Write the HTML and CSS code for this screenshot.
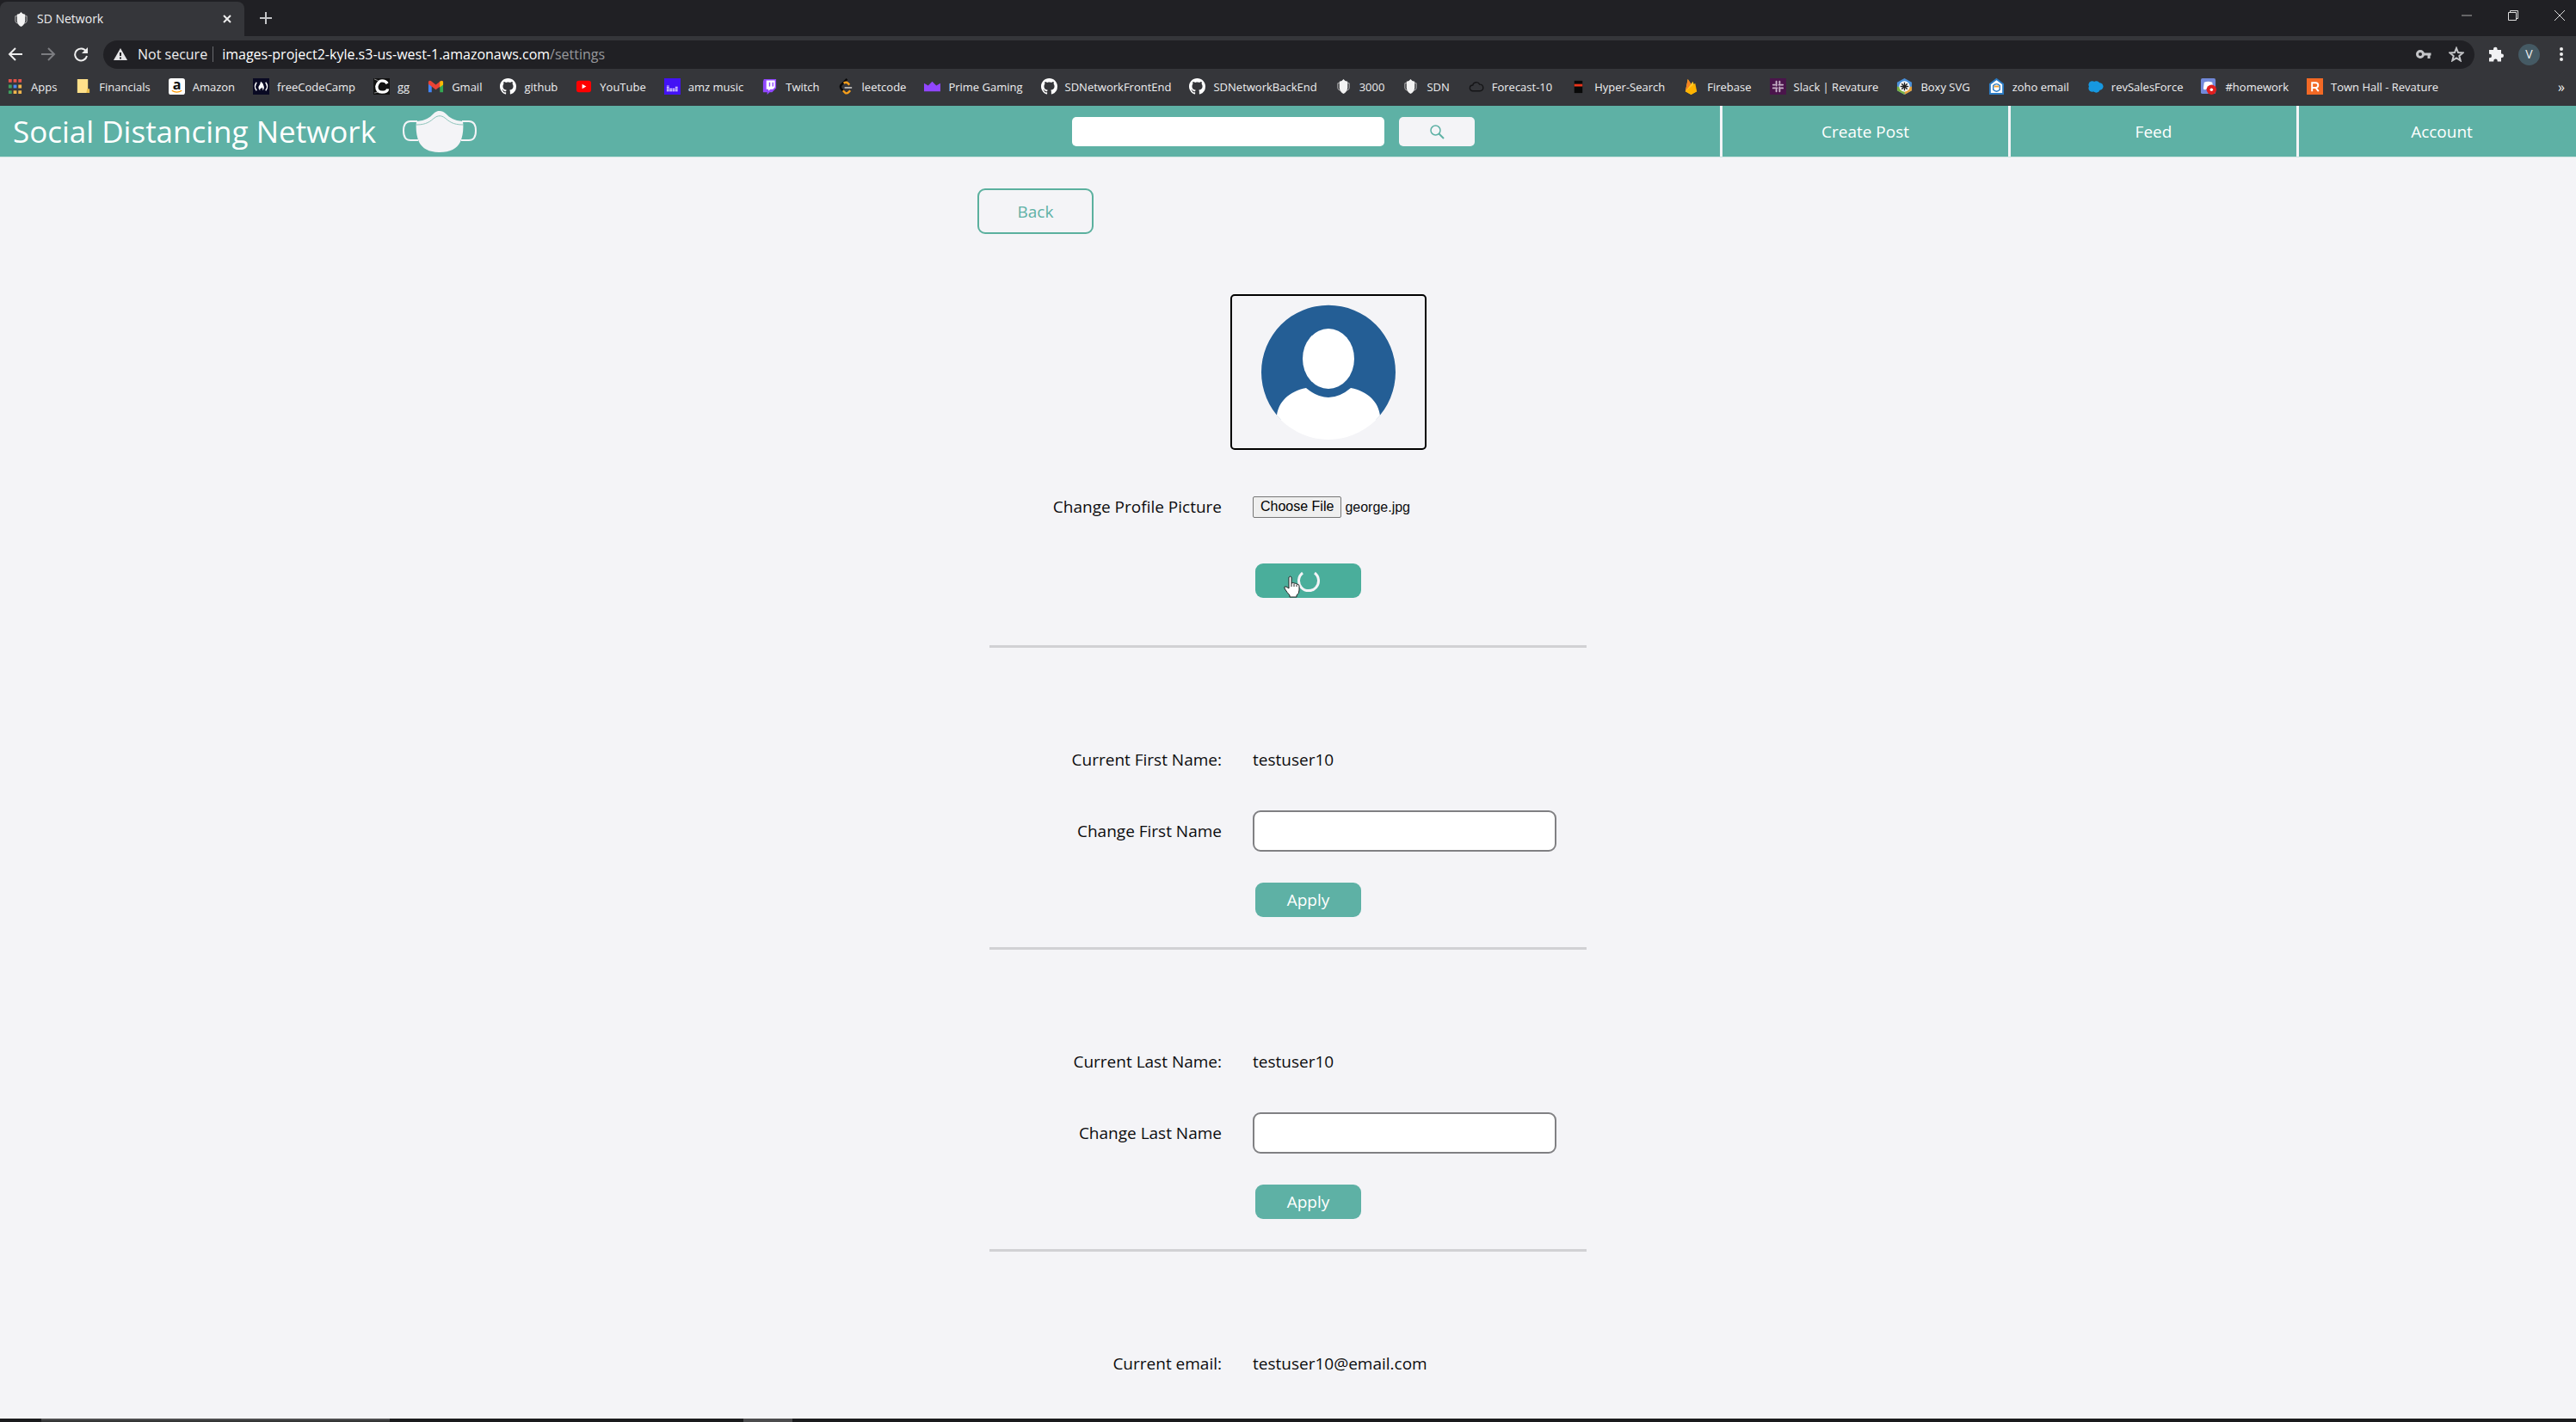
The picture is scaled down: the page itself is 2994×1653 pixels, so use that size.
FILE: index.html
```html
<!DOCTYPE html>
<html lang="en">
<head>
<meta charset="utf-8">
<title>SD Network</title>
<link rel="stylesheet" href="styles.css">
</head>
<body>
<svg class="defs" aria-hidden="true">
  <symbol id="i-mask" viewBox="0 0 20 20"><path d="M5 6H3v6q0 2 3 3M15 6h2v6q0 2-3 3" fill="none" stroke="#b9b9bc" stroke-width="1"/><path d="M5 4q3 0 5-3q2 3 5 3v8q-1 5-5 7q-4-2-5-7z" fill="#f2f2f2"/></symbol>
  <symbol id="i-github" viewBox="0 0 16 16"><path fill="#fff" d="M8 0C3.58 0 0 3.58 0 8c0 3.54 2.29 6.53 5.47 7.59.4.07.55-.17.55-.38 0-.19-.01-.82-.01-1.49-2.01.37-2.53-.49-2.69-.94-.09-.23-.48-.94-.82-1.13-.28-.15-.68-.52-.01-.53.63-.01 1.08.58 1.23.82.72 1.21 1.87.87 2.33.66.07-.52.28-.87.51-1.07-1.78-.2-3.64-.89-3.64-3.95 0-.87.31-1.59.82-2.15-.08-.2-.36-1.02.08-2.12 0 0 .67-.21 2.2.82.64-.18 1.32-.27 2-.27s1.36.09 2 .27c1.53-1.04 2.2-.82 2.2-.82.44 1.1.16 1.92.08 2.12.51.56.82 1.27.82 2.15 0 3.07-1.87 3.75-3.65 3.95.29.25.54.73.54 1.48 0 1.07-.01 1.93-.01 2.2 0 .21.15.46.55.38A8.01 8.01 0 0 0 16 8c0-4.42-3.58-8-8-8z"/></symbol>
</svg>

<header class="browser">
  <div class="tabs">
    <div class="tab">
      <svg class="fav"><use href="#i-mask"/></svg>
      <span class="tab-title">SD Network</span>
      <button class="bare" aria-label="Close tab"><svg width="10" height="10" viewBox="0 0 10 10"><path d="M1 1l8 8M9 1l-8 8" stroke="#eee" stroke-width="2"/></svg></button>
    </div>
    <button class="bare new-tab" aria-label="New tab"><svg width="14" height="14" viewBox="0 0 14 14"><path d="M7 0v14M0 7h14" stroke="#c4c5c8" stroke-width="2"/></svg></button>
    <div class="window-controls">
      <button class="bare" aria-label="Minimize"><svg width="14" height="14" viewBox="0 0 14 14"><path d="M1 7h12" stroke="#aaa"/></svg></button>
      <button class="bare" aria-label="Restore"><svg width="14" height="14" viewBox="0 0 14 14"><path d="M1.500 3.500h9v9h-9zM3.500 3V1.500h9v9H11" fill="none" stroke="#ddd"/></svg></button>
      <button class="bare" aria-label="Close"><svg width="14" height="14" viewBox="0 0 14 14"><path d="M1 1l12 12M13 1L1 13" stroke="#ddd"/></svg></button>
    </div>
  </div>

  <div class="toolbar">
    <button class="bare" aria-label="Back"><svg width="18" height="18" viewBox="0 0 18 18"><path d="M17 9H2M9 2L2 9l7 7" fill="none" stroke="#eee" stroke-width="2"/></svg></button>
    <button class="bare" aria-label="Forward"><svg width="18" height="18" viewBox="0 0 18 18"><path d="M1 9h15M9 2l7 7-7 7" fill="none" stroke="#7c7d81" stroke-width="2"/></svg></button>
    <button class="bare" aria-label="Reload"><svg width="18" height="18" viewBox="0 0 18 18"><path d="M15 5.500A7 7 0 1 0 16 11" fill="none" stroke="#eee" stroke-width="2"/><path d="M17 1v7h-7z" fill="#eee"/></svg></button>
    <div class="address">
      <svg width="16" height="16" viewBox="0 0 16 16"><path d="M8 1l8 14H0z" fill="#e4e4e6"/><path d="M8 6v4M8 11.500v2" stroke="#202124" stroke-width="2"/></svg>
      <span class="insecure">Not secure</span>
      <span class="url">images-project2-kyle.s3-us-west-1.amazonaws.com<span class="path">/settings</span></span>
      <button class="bare" aria-label="Saved passwords"><svg width="18" height="14" viewBox="0 0 18 14"><circle cx="5" cy="7" r="3.500" fill="none" stroke="#c4c5c8" stroke-width="3"/><path d="M9 7h8.500M15 7v5" stroke="#c4c5c8" stroke-width="3"/></svg></button>
      <button class="bare" aria-label="Bookmark this page"><svg width="18" height="18" viewBox="0 0 18 18"><path d="M9 2l2 5 5.500.4-4.200 3.600 1.400 5.400L9 13.500l-4.700 2.900L5.700 11 1.500 7.400 7 7z" fill="none" stroke="#c4c5c8" stroke-width="2"/></svg></button>
    </div>
    <button class="bare ext" aria-label="Extensions"><svg width="18" height="18" viewBox="0 0 18 18"><path d="M1 4h5V3a2.300 2.300 0 0 1 4.600 0v1H15v4.500h.7a2.300 2.300 0 0 1 0 4.600H15V17.500h-4.300v-.8a2.200 2.200 0 0 0-4.400 0v.8H1v-4.300h.8a2.200 2.200 0 0 0 0-4.400H1z" fill="#f1f1f3"/></svg></button>
    <button class="bare avatar" aria-label="Profile">V</button>
    <button class="bare" aria-label="Menu"><svg width="6" height="18" viewBox="0 0 6 18"><g fill="#eee"><circle cx="3" cy="3" r="2"/><circle cx="3" cy="9" r="2"/><circle cx="3" cy="15" r="2"/></g></svg></button>
  </div>

  <nav class="bookmarks" aria-label="Bookmarks">
    <a href="#"><svg class="fav" viewBox="0 0 20 20"><path d="M2 1h4v4H2zM8 1h4v4H8zM14 1h4v4h-4z" fill="#e4534a"/><path d="M2 8h4v4H2zM2 15h4v4H2z" fill="#3f9f5f"/><path d="M8 8h4v4H8z" fill="#4a8af4"/><path d="M14 8h4v4h-4zM8 15h4v4H8zM14 15h4v4h-4z" fill="#f0b54c"/></svg>Apps</a>
    <a href="#"><svg class="fav" viewBox="0 0 20 20"><path d="M3 1h13v12l2 5H3z" fill="#ffe08a"/><path d="M15 13h3v5h-4z" fill="#e9bd4d"/></svg>Financials</a>
    <a href="#"><svg class="fav" viewBox="0 0 20 20"><rect width="20" height="20" rx="3" fill="#fff"/><text x="10" y="14" text-anchor="middle" class="letter">a</text><path d="M4 15q6 4 12 0" fill="none" stroke="#f90" stroke-width="1.500"/></svg>Amazon</a>
    <a href="#"><svg class="fav" viewBox="0 0 20 20"><path d="M0 0h20v20H0z" fill="#0a0a23"/><path d="M4.500 5q-4 5 0 10M15.500 5q4 5 0 10" fill="none" stroke="#fff" stroke-width="1.500"/><path d="M9.500 4q3 2 3.500 5 1.500 3-1 6 .5-2-1-4-1 2-2 1.500-1 1 0 2.500-3-2-2-5 2-2 2.500-6z" fill="#fff"/></svg>freeCodeCamp</a>
    <a href="#"><svg class="fav" viewBox="0 0 20 20"><path d="M0 0h20v20H0z" fill="#111"/><path d="M17 6.500Q15 3 10.500 3T4 10q0 7 6.500 7t7-4" fill="none" stroke="#fff" stroke-width="3.500"/><path d="M1 1l5 2M1 18l5-1" stroke="#999"/></svg>gg</a>
    <a href="#"><svg class="fav" viewBox="0 0 20 20"><path d="M1 5v12h4V8z" fill="#4285f4"/><path d="M19 5v12h-4V8z" fill="#34a853"/><path d="M1 4q2-2 4 0l5 4 5-4q2-2 4 0v3l-9 7-9-7z" fill="#ea4335"/><path d="M15 4q4-2 4 1v3l-4 3z" fill="#fbbc04"/></svg>Gmail</a>
    <a href="#"><svg class="fav"><use href="#i-github"/></svg>github</a>
    <a href="#"><svg class="fav" viewBox="0 0 20 20"><rect x="1" y="3" width="18" height="14" rx="3" fill="#f00"/><path d="M8 7l5 3-5 3z" fill="#fff"/></svg>YouTube</a>
    <a href="#"><svg class="fav" viewBox="0 0 20 20"><path d="M0 0h20v20H0z" fill="#4312f5"/><path d="M4.500 16V9M8 16v-4M11.500 16v-4M15 16v-6" stroke="#d9cffd" stroke-width="3" stroke-dasharray="1.500 .6"/></svg>amz music</a>
    <a href="#"><svg class="fav" viewBox="0 0 20 20"><path d="M3 1h15v11l-5 5h-3l-3 3v-3H2V4z" fill="#9146ff"/><path d="M6 2.500h10.500V11L14 13.500h-3l-2.500 2v-2H6z" fill="#fff"/><path d="M10 5v5M14 5v5" stroke="#9146ff" stroke-width="1.500"/></svg>Twitch</a>
    <a href="#"><svg class="fav" viewBox="0 0 20 20"><path d="M11 1L4 8q-2 2 0 5l3 3" fill="none" stroke="#080808" stroke-width="2.500"/><path d="M7 6q3-2 5 0l2 2M6 15l3 3q2 1 4-1l2-2" fill="none" stroke="#f89f1b" stroke-width="2.500"/><path d="M8 11.500h9" stroke="#b3b3b3" stroke-width="2"/></svg>leetcode</a>
    <a href="#"><svg class="fav" viewBox="0 0 20 20"><path d="M0 6l5 3 5-5 5 5 5-3v10H0z" fill="#9146ff"/></svg>Prime Gaming</a>
    <a href="#"><svg class="fav"><use href="#i-github"/></svg>SDNetworkFrontEnd</a>
    <a href="#"><svg class="fav"><use href="#i-github"/></svg>SDNetworkBackEnd</a>
    <a href="#"><svg class="fav"><use href="#i-mask"/></svg>3000</a>
    <a href="#"><svg class="fav"><use href="#i-mask"/></svg>SDN</a>
    <a href="#"><svg class="fav" viewBox="0 0 20 20"><path d="M6 15.500a3.500 3.500 0 0 1 0-7 4.500 4.500 0 0 1 8.500-1 4 4 0 0 1 .5 8z" fill="none" stroke="#151517" stroke-width="1.500"/></svg>Forecast-10</a>
    <a href="#"><svg class="fav" viewBox="0 0 20 20"><path d="M5 3h10v15H5z" fill="#080808"/><path d="M5 7h10v3H5z" fill="#e8351c"/></svg>Hyper-Search</a>
    <a href="#"><svg class="fav" viewBox="0 0 20 20"><path d="M3 16L6 1l4 6 2-3 5 12-7 4z" fill="#ffca28"/><path d="M3 16L6 1l4 6z" fill="#f58220"/><path d="M3 16L15 6l2 10-7 4z" fill="#ffb300"/></svg>Firebase</a>
    <a href="#"><svg class="fav" viewBox="0 0 20 20"><path d="M0 0h20v20H0z" fill="#4a154b"/><path d="M8 4v5M12 11v5M11 8h5M4 12h5M12 4v2M8 14v2M4 8h2M14 12h2" stroke="#c9b5ca" stroke-width="2" stroke-linecap="round"/></svg>Slack | Revature</a>
    <a href="#"><svg class="fav" viewBox="0 0 20 20"><path d="M10 0l9 5v10l-9 5-9-5V5z" fill="#4a90d9"/><path d="M19 10v5l-9 5v-8z" fill="#e9a23b"/><path d="M1 10v5l9 5v-8z" fill="#7cb342"/><circle cx="10" cy="10" r="6.500" fill="#fff"/><path d="M10 5v10M5 10h10M6.500 6.500l7 7M13.500 6.500l-7 7" stroke="#222" stroke-width="1.500"/></svg>Boxy SVG</a>
    <a href="#"><svg class="fav" viewBox="0 0 20 20"><path d="M10 1l8 6v12H2V7z" fill="#fff" stroke="#2b7bc4" stroke-width="2"/><path d="M6 9q4-4 8 0v5q-4 4-8 0z" fill="none" stroke="#2b7bc4" stroke-width="1.500"/><path d="M7 10h6" stroke="#f0a030" stroke-width="2"/></svg>zoho email</a>
    <a href="#"><svg class="fav" viewBox="0 0 20 20"><g fill="#1798e0"><circle cx="6" cy="8" r="4.500"/><circle cx="11" cy="8" r="4.500"/><circle cx="15" cy="10" r="4.500"/><circle cx="6" cy="12" r="4.500"/><circle cx="11" cy="13" r="4.500"/></g></svg>revSalesForce</a>
    <a href="#"><svg class="fav" viewBox="0 0 20 20"><rect width="18" height="19" rx="2" fill="#7289da"/><path d="M4 5q5-2 10 0l1 8q-3 2-5 0H7q-2 2-4 0z" fill="#fff"/><circle cx="13" cy="14" r="6" fill="#e01e1e"/><circle cx="13" cy="14" r="1.800" fill="#fff"/></svg>#homework</a>
    <a href="#"><svg class="fav" viewBox="0 0 20 20"><path d="M0 0h20v20H0z" fill="#f26925"/><path d="M6.500 16V5.500H11q3 0 3 3t-3 3H7M11 11.500l3.500 4.500" fill="none" stroke="#fff" stroke-width="2"/></svg>Town Hall - Revature</a>
    <button class="bare more" aria-label="More bookmarks">»</button>
  </nav>
</header>

<header class="site">
  <a class="brand" href="#">Social Distancing Network
    <svg width="86" height="50" viewBox="0 0 86 50"><path d="M17 13H9C3 13 1 17 1 24s3 11 8 11h9M69 13h8c6 0 8 4 8 11s-3 11-8 11h-9" fill="none" stroke="#f4f4f7" stroke-width="2"/><path d="M16 13C27 12 31 9 36 4c4-4 10-4 14 0 5 5 9 8 20 9 1 9 0 17-3 24-4 8-12 12-24 12s-20-4-24-12c-3-7-4-15-3-24z" fill="#f4f4f7"/><path d="M16 17c12 0 16-4 21-8 4-3 8-3 12 0 5 4 9 8 21 8" fill="none" stroke="#8fc5bc" stroke-width="1"/></svg>
  </a>
  <form class="search">
    <input type="search" aria-label="Search">
    <button type="button" aria-label="Search"><svg width="18" height="18" viewBox="0 0 18 18"><circle cx="7.500" cy="7.500" r="5.500" fill="none" stroke="#5eb1a5" stroke-width="1.500"/><path d="M11.500 11.500L17 17" stroke="#5eb1a5" stroke-width="2"/></svg></button>
  </form>
  <nav class="site-nav">
    <a href="#">Create Post</a>
    <a href="#">Feed</a>
    <a href="#">Account</a>
  </nav>
</header>

<main class="settings">
  <button class="back">Back</button>

  <form class="section picture">
    <svg class="portrait" viewBox="0 0 224 177" role="img" aria-label="Profile picture"><clipPath id="disc"><circle cx="112" cy="89" r="78"/></clipPath><path d="M57 144a78 78 0 1 1 110 0z" fill="#245e95"/><g clip-path="url(#disc)"><path d="M52 139c2-16 14-28 34-32q26 22 52 0c20 4 32 16 34 32v40H52z" fill="#fff"/></g><ellipse cx="112" cy="73" rx="30" ry="35" fill="#fff"/></svg>
    <label for="photo">Change Profile Picture</label>
    <input id="photo" class="file" type="file">
    <button class="apply busy" type="button" aria-label="Applying">
      <svg width="28" height="28" viewBox="0 0 28 28"><path d="M7 5a11.500 11.500 0 1 0 14 0" fill="none" stroke="#f4f4f7" stroke-width="3"/></svg>
      <svg class="pointer" width="20" height="26" viewBox="0 0 20 26"><path d="M7 2q2-2 3 0v7q2-1 3 0 2 0 3 1 3 0 3 2v5q0 4-3 6v2H8v-2q-3-3-6-8-1-3 2-2l3 2z" fill="#fff" stroke="#222"/><path d="M10 9v4M13 10v3M16 11v2" stroke="#222"/></svg>
    </button>
  </form>

  <form class="section">
    <span class="name">Current First Name:</span><span>testuser10</span>
    <label for="first">Change First Name</label><input id="first" class="field" type="text">
    <button class="apply" type="button">Apply</button>
  </form>

  <form class="section">
    <span class="name">Current Last Name:</span><span>testuser10</span>
    <label for="last">Change Last Name</label><input id="last" class="field" type="text">
    <button class="apply" type="button">Apply</button>
  </form>

  <form class="section last">
    <span class="name">Current email:</span><span>testuser10@email.com</span>
  </form>
</main>

<footer class="taskbar"><span class="task wide"></span><span class="task"></span></footer>
<script src="script.js"></script>
</body>
</html>
```
FILE: styles.css
```css
* { box-sizing: border-box; }
body {
  margin: 0;
  min-height: 100vh;
  display: flex;
  flex-direction: column;
  background: #f4f4f7;
  color: #0c0c0e;
  font: 19px/26px "Open Sans", "Noto Sans", sans-serif;
}
button, input { font: inherit; color: inherit; }
a { color: inherit; text-decoration: none; }
svg { display: block; flex: none; }
.defs { position: absolute; width: 0; height: 0; }
.bare {
  display: flex;
  align-items: center;
  justify-content: center;
  padding: 0;
  border: 0;
  background: none;
}
.fav { width: 19px; height: 19px; overflow: visible; }
.letter { font: bold 17px "Open Sans", sans-serif; fill: #111; }

/* Browser frame */
.browser { background: #35363a; color: #eeeef0; padding-bottom: 6px; }
.tabs { display: flex; align-items: center; height: 42px; background: #202024; }
.tab {
  display: flex;
  align-items: center;
  gap: 9px;
  width: 284px;
  height: 40px;
  margin-top: 2px;
  padding: 0 15px;
  border-radius: 8px 8px 0 0;
  background: #35363a;
  font-size: 14px;
}
.tab-title { flex: 1; }
.new-tab { margin-left: 18px; }
.window-controls { display: flex; gap: 40px; margin-left: auto; padding: 0 12px 6px 0; }
.toolbar { display: flex; align-items: center; height: 42px; padding: 0 14px 0 9px; gap: 20px; }
.address {
  flex: 1;
  display: flex;
  align-items: center;
  gap: 20px;
  height: 33px;
  margin-left: -3px;
  padding: 0 12px;
  border-radius: 17px;
  background: #202024;
  font-size: 16px;
}
.address > svg { margin-right: -8px; }
.insecure { padding-right: 6px; border-right: 1px solid #6a6b6f; line-height: 18px; }
.url { flex: 1; margin-left: -10px; color: #fff; }
.path { color: #97989c; }
.ext { margin-left: -4px; }
.avatar { width: 25px; height: 25px; margin-left: -3px; border-radius: 50%; background: #455a64; font-size: 14px; }
.toolbar > .avatar + .bare { width: 6px; margin-left: 2px; }
.bookmarks {
  display: flex;
  align-items: center;
  gap: 21px;
  height: 33px;
  padding: 0 13px 0 8px;
  font-size: 13px;
  white-space: nowrap;
}
.bookmarks a { display: flex; align-items: center; gap: 9px; }
.more { margin-left: auto; font-size: 16px; }

/* Site header */
.site { display: flex; height: 60px; padding-top: 1px; background: #5eb1a5; border-bottom: 1px solid #cfe5e2; color: #fff; }
.brand { flex: 1; display: flex; align-items: center; gap: 31px; padding-left: 15px; font-size: 35px; }
.search { display: flex; align-items: center; gap: 17px; margin-right: 285px; }
.search input { width: 363px; height: 34px; border: 0; border-radius: 5px; background: #fff; }
.search button {
  display: flex;
  align-items: center;
  justify-content: center;
  width: 88px;
  height: 34px;
  border: 0;
  border-radius: 5px;
  background: #f4f4f7;
}
.site-nav { display: flex; margin-top: -1px; }
.site-nav a {
  display: flex;
  align-items: center;
  justify-content: center;
  width: 335px;
  padding-top: 1px;
  border-left: 3px solid #f4f4f7;
}
.site-nav a:last-child { width: 325px; padding-left: 10px; }

/* Settings form */
.settings { width: 100%; max-width: 722px; margin: 0 auto; padding: 36px 14px 0; }
.back {
  display: block;
  width: 135px;
  height: 53px;
  margin-left: -14px;
  border: 2px solid #5bb09e;
  border-radius: 9px;
  background: none;
  color: #5eb1a5;
}
.section {
  display: grid;
  grid-template-columns: 270px 353px;
  column-gap: 36px;
  align-items: center;
  padding: 117px 0 35px;
  border-bottom: 3px solid #d1d1d4;
}
.section label, .name { grid-column: 1; text-align: right; }
.section label { margin-top: 46px; }
.field {
  height: 48px;
  margin-top: 46px;
  padding: 0 12px;
  border: 2px solid #808083;
  border-radius: 9px;
  background: #fff;
}
.apply {
  grid-column: 2;
  display: flex;
  align-items: center;
  justify-content: center;
  position: relative;
  width: 123px;
  height: 40px;
  margin: 36px 0 0 3px;
  padding: 0;
  border: 0;
  border-radius: 9px;
  background: #5eb1a5;
  color: #fff;
}
.last { border: 0; padding-bottom: 0; }
.picture { padding: 70px 0 55px; }
.portrait {
  grid-column: 1 / -1;
  width: 228px;
  height: 181px;
  margin-left: 280px;
  border: 2px solid #000;
  border-radius: 5px;
}
.picture label { margin-top: 53px; }
.file { margin-top: 53px; font: 16px/18px "Liberation Sans", Arial, sans-serif; }
.file::file-selector-button {
  height: 25px;
  padding: 0 8px;
  border: 1px solid #767676;
  border-radius: 2px;
  background: #efefef;
  font: inherit;
}
.busy { margin-top: 53px; background: #4aae9b; }
.pointer { position: absolute; left: 32px; top: 14px; }

/* Top edge of the system taskbar */
.taskbar { display: flex; gap: 411px; height: 4px; margin-top: auto; padding-left: 48px; background: #1a1b1d; }
.task { width: 57px; background: #4c4c4e; }
.task.wide { width: 405px; background: #343536; border-top: 2px solid #4c4c4e; }
```
FILE: script.js
```js
const picked = new DataTransfer();
picked.items.add(new File([""], "george.jpg", { type: "image/jpeg" }));
document.getElementById("photo").files = picked.files;
```
